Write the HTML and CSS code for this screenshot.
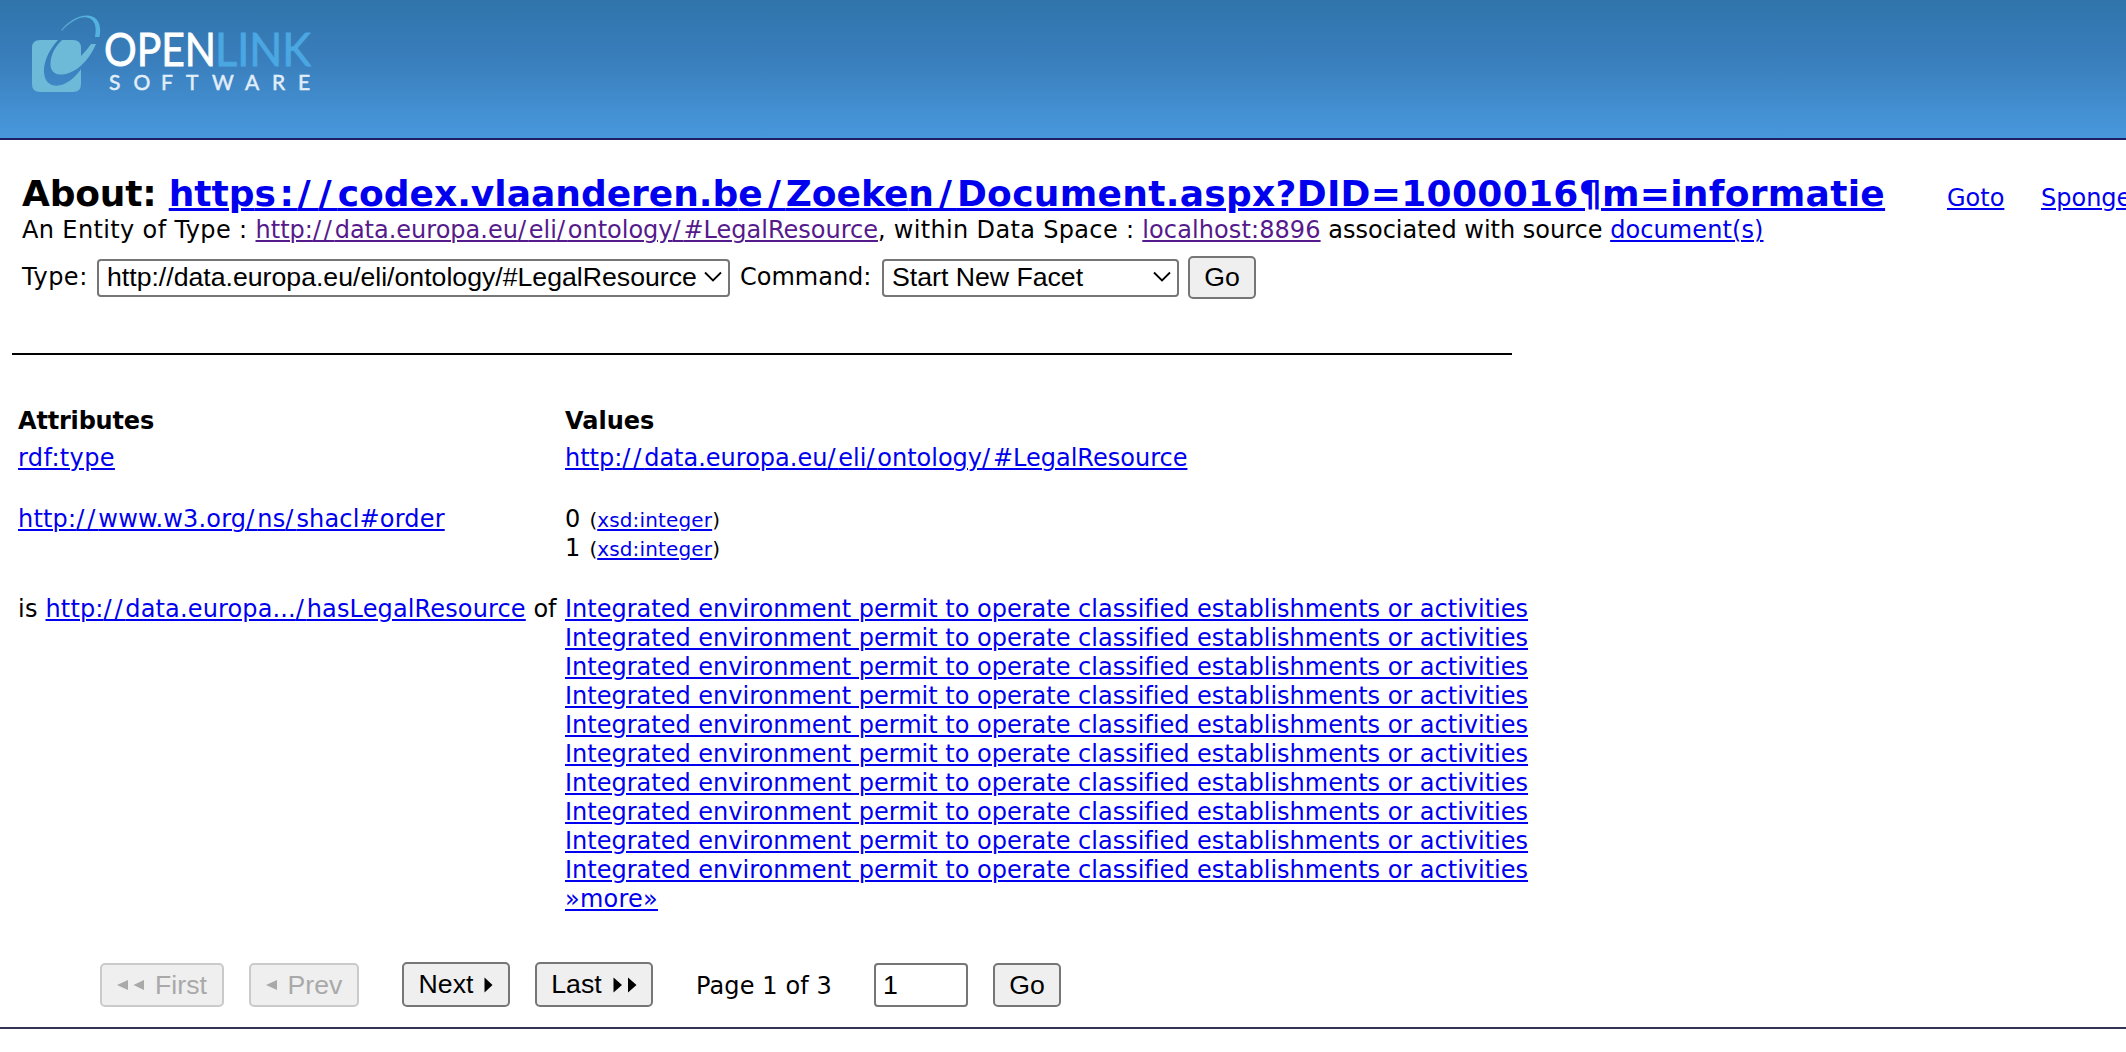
FILE: index.html
```html
<!DOCTYPE html>
<html lang="en">
<head>
<meta charset="utf-8">
<title>About: https://codex.vlaanderen.be</title>
<link rel="stylesheet" href="styles.css">
</head>
<body>
<header class="banner">
<svg class="logo" width="290" height="84" viewBox="28 10 290 84" role="img" aria-label="OpenLink Software">
  <defs><linearGradient id="swoosh" x1="0" x2="1"><stop offset="0" stop-color="#6cb9d8" stop-opacity=".55"/><stop offset=".7" stop-color="#53b3de"/></linearGradient></defs>
  <path fill="#6cb9d8" d="M40 40H58C48 51 42 65 44.500 76C47 86 56 87 63 84.500C71 81 77 75 81 69V84Q81 92 73 92H40Q32 92 32 84V48Q32 40 40 40Z"/>
  <path fill="#6cb9d8" d="M62 40H73Q81 40 81 48V56Q87 50 91 44H96C91 56 81 69 69 73C61 76 53 75 51 68C49 60 53 48 62 40Z"/>
  <path fill="url(#swoosh)" d="M61 30C68 21 79 15 88 15.500C98 16.500 102 25 99.500 37H95C97 27 95 19 87 17.500C79 16 69 23 62 31Z"/>
  <text class="logo-name" x="104" y="66" textLength="112" lengthAdjust="spacingAndGlyphs" fill="#fff" stroke="#fff">OPEN</text>
  <text class="logo-name" x="215" y="66" textLength="96" lengthAdjust="spacingAndGlyphs" fill="#4aa7e1" stroke="#4aa7e1">LINK</text>
  <text class="logo-sub" y="90" x="109 133.500 161 186 212 245 272 298" fill="#e2eef9">SOFTWARE</text>
</svg>
</header>
<main>
<section class="intro">
  <div class="title-row">
    <h1>About: <a href="#">http<span class="half">s:</span><span class="full">/</span><span class="after">/</span>codex.vlaanderen.b<span class="mid">e/</span>Zoeke<span class="mid">n/</span><span class="doc">Document.aspx?DID=1000016¶m=informatie</span></a></h1>
    <a class="goto" href="#">Goto</a>
    <a class="sponge" href="#">Sponge</a>
  </div>
  <p class="entity"><span class="lead">An Entity of Type : </span><a class="visited" href="#">http:<span class="sl">//</span>data.europa.eu<span class="sl">/</span>eli<span class="sl">/</span>ontology<span class="sl">/</span>#LegalResource</a><span class="within">, within Data Space : </span><a class="visited host" href="#">localhost:8896</a> associated with source <a class="docs" href="#">document(s)</a></p>
  <form class="command">
    <label class="type-label">Type:</label>
    <span class="select type-select">http://data.europa.eu/eli/ontology/#LegalResource<svg width="18" height="12" viewBox="0 0 18 12"><path d="M1 1.500L9 9.500L17 1.500"/></svg></span>
    <label class="command-label">Command:</label>
    <span class="select command-select">Start New Facet<svg width="18" height="12" viewBox="0 0 18 12"><path d="M1 1.500L9 9.500L17 1.500"/></svg></span>
    <button type="button" class="btn command-go">Go</button>
  </form>
</section>
<hr>
<section class="facts">
  <div class="cell head attr">Attributes</div><div class="cell head">Values</div>
  <div class="cell"><a class="rdf" href="#">rdf:type</a></div>
  <div class="cell"><a href="#">http:<span class="sl">//</span>data.europa.eu<span class="sl">/</span>eli<span class="sl">/</span>ontology<span class="sl">/</span>#LegalResource</a></div>
  <div class="cell"><a class="order" href="#">http:<span class="sl">//</span>www.w3.org<span class="sl">/</span>ns<span class="sl">/</span>shacl#order</a></div>
  <ul class="cell">
    <li class="typed">0 <small>(<a href="#">xsd:integer</a>)</small></li>
    <li class="typed">1 <small>(<a href="#">xsd:integer</a>)</small></li>
  </ul>
  <div class="cell last"><span class="is">is </span><a class="has" href="#">http:<span class="sl">//</span>data.europa...<span class="sl">/</span>hasLegalResource</a> of</div>
  <ul class="cell last">
    <li><a href="#">Integrated environment permit to operate classified establishments or activities</a></li>
    <li><a href="#">Integrated environment permit to operate classified establishments or activities</a></li>
    <li><a href="#">Integrated environment permit to operate classified establishments or activities</a></li>
    <li><a href="#">Integrated environment permit to operate classified establishments or activities</a></li>
    <li><a href="#">Integrated environment permit to operate classified establishments or activities</a></li>
    <li><a href="#">Integrated environment permit to operate classified establishments or activities</a></li>
    <li><a href="#">Integrated environment permit to operate classified establishments or activities</a></li>
    <li><a href="#">Integrated environment permit to operate classified establishments or activities</a></li>
    <li><a href="#">Integrated environment permit to operate classified establishments or activities</a></li>
    <li><a href="#">Integrated environment permit to operate classified establishments or activities</a></li>
    <li><a class="more" href="#">»more»</a></li>
  </ul>
</section>
<nav class="pager">
  <button type="button" class="btn first" disabled><svg width="28" height="12" viewBox="0 0 28 12"><path d="M0 6L11 1V11ZM16.500 6L27 1V11Z"/></svg>First</button>
  <button type="button" class="btn prev" disabled><svg width="12" height="12" viewBox="0 0 12 12"><path d="M0 6L11 1V11Z"/></svg>Prev</button>
  <button type="button" class="btn next">Next<svg width="9" height="16" viewBox="0 0 9 16"><path d="M0.500 0.500L8.500 8L0.500 15.500Z"/></svg></button>
  <button type="button" class="btn end">Last<svg width="24" height="16" viewBox="0 0 24 16"><path d="M0.500 0.500L9 8L0.500 15.500ZM15 0.500L23.500 8L15 15.500Z"/></svg></button>
  <span class="page">Page 1 of 3</span>
  <input class="page-input" type="text" value="1">
  <button type="button" class="btn page-go">Go</button>
</nav>
</main>
</body>
</html>
```
FILE: styles.css
```css
* { box-sizing: border-box; }

body {
  margin: 0;
  overflow: hidden;
  background: #fff;
  color: #000;
  font: 24px/29px Verdana, "DejaVu Sans", sans-serif;
  font-variant-ligatures: none;
  white-space: nowrap;
}

a {
  color: #0000ee;
  text-decoration: underline;
  text-decoration-thickness: 2px;
  text-underline-offset: 2px;
}
a.visited { color: #551a8b; }
.sl { letter-spacing: 2.8px; }

.banner {
  height: 140px;
  padding: 10px 0 0 28px;
  background: linear-gradient(#3074ab, #3a7fbd 45%, #4898dc);
  border-bottom: 2px solid #1f1f66;
}
.logo { display: block; overflow: hidden; }
.logo-name { font: 47px Lato, sans-serif; stroke-width: 0.8px; }
.logo-sub { font: 21px Lato, sans-serif; stroke: #e2eef9; stroke-width: 0.5px; }

.intro { padding: 32px 0 0 22px; height: 213px; }
.title-row { display: flex; align-items: baseline; height: 44px; width: 2200px; }
h1 {
  width: 1925px;
  margin: 0;
  font-size: 36px;
  line-height: 44px;
  letter-spacing: -0.2px;
  white-space: pre;
}
h1 a {
  letter-spacing: 0;
  text-decoration-thickness: 3px;
}
.half { letter-spacing: 3.5px; }
.full { letter-spacing: 8px; }
.after { letter-spacing: 6px; }
.mid { letter-spacing: 4.9px; }
.doc { letter-spacing: 0.3px; }
.goto { width: 94px; }

.entity { margin: 0; white-space: pre; }
.lead { letter-spacing: 0.366px; }
.within { letter-spacing: 0.33px; }
.host { letter-spacing: 0.1px; }
.docs { letter-spacing: 0.1px; }

.command { display: flex; align-items: center; height: 43px; margin-top: 11px; }
.type-label { width: 75px; letter-spacing: 0.5px; }
.command-label { width: 142px; }
.select {
  display: flex;
  align-items: center;
  justify-content: space-between;
  height: 38px;
  border: 2px solid #767676;
  border-radius: 4px;
  padding: 0 6px 2px 8px;
  font: 26.67px/32px Arial, "Liberation Sans", sans-serif;
}
.select svg { fill: none; stroke: #000; stroke-width: 1.8; }
.type-select { width: 633px; margin-right: 10px; }
.command-select { width: 297px; margin-right: 9px; }

.btn {
  display: flex;
  align-items: center;
  justify-content: center;
  height: 43px;
  padding: 0;
  border: 2px solid #767676;
  border-radius: 5px;
  background: #efefef;
  color: #000;
  font: 26.67px Arial, "Liberation Sans", sans-serif;
}
.btn svg { fill: currentColor; }
.btn:disabled { color: #a9a9a9; border-color: #cacaca; }
.command-go { width: 68px; }

hr {
  width: 1500px;
  height: 2px;
  margin: 0 0 0 12px;
  border: 0;
  background: #000;
}

.facts {
  display: grid;
  grid-template-columns: 547px 963px;
  padding: 52px 0 0 18px;
}
.cell { margin: 0; padding: 0 0 32px; list-style: none; }
.cell.head { padding-bottom: 8px; font-weight: bold; }
.cell.attr { letter-spacing: -0.19px; }
.cell.last { padding: 0; }
.cell li { height: 29px; }
.typed { word-spacing: 1.5px; }
.cell small { font-size: 20px; }
.cell small a { letter-spacing: 0.15px; }
.rdf { letter-spacing: 0.37px; }
.order { letter-spacing: 0.17px; }
.order .sl { letter-spacing: 2.97px; }
.is { letter-spacing: 0.23px; }
.has { letter-spacing: 0.14px; }
.more { letter-spacing: 0.24px; }

.pager {
  display: flex;
  align-items: flex-end;
  height: 115px;
  padding: 0 0 20px 100px;
  border-bottom: 2px solid #333355;
}
.pager .btn { height: 44px; }
.pager .first { width: 124px; margin-right: 25px; gap: 10px; }
.pager .prev { width: 110px; margin-right: 43px; gap: 10px; }
.pager .next { width: 108px; height: 45px; margin-right: 25px; gap: 11px; }
.pager .end { width: 118px; height: 45px; margin-right: 43px; gap: 11px; }
.page { width: 178px; padding-bottom: 6px; letter-spacing: 0.12px; }
.page-input {
  width: 94px;
  height: 44px;
  margin: 0 25px 0 0;
  padding: 0 0 0 7px;
  border: 2px solid #767676;
  border-radius: 4px;
  font: 26.67px Arial, "Liberation Sans", sans-serif;
}
.pager .page-go { width: 68px; }
```
